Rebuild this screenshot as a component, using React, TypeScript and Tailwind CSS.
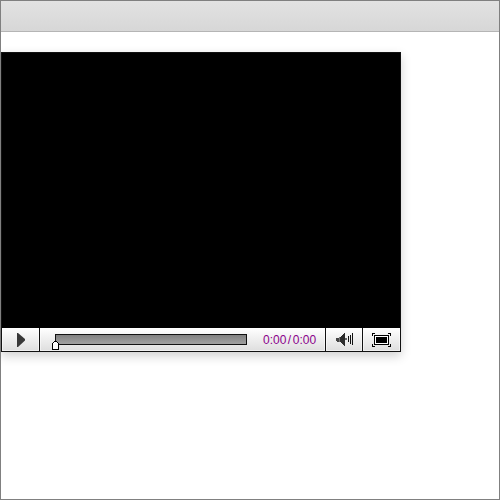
function PlayIcon() {
  return (
    <svg width="8" height="14" viewBox="0 0 8 14">
      <path d="M0 0h1L8 6v1.6L1 14H0Z" fill="#383838" />
    </svg>
  );
}

function VolumeIcon() {
  return (
    <svg width="17" height="13" viewBox="0 0 17 13" shapeRendering="crispEdges">
      <path d="M0 5h3v4H1v-1H0z" fill="#444" />
      <path d="M3 4h1v5H3z" fill="#777" />
      <path d="M4 4h1V3h1V2h1V1h1V0h1v13H8v-1H7v-1H6v-1H5V9H4z" fill="#2c2c2c" />
      <path d="M9 5h2v2H9z" fill="#666" />
      <path d="M12 3h1v6h-1zM14 2h1v9h-1zM16 0h1v12h-1z" fill="#111" />
    </svg>
  );
}

function FullscreenIcon() {
  return (
    <svg width="19" height="14" viewBox="0 0 19 14" shapeRendering="crispEdges">
      <path d="M0 0h3v1H1v2H0zM16 0h3v3h-1V1h-2zM0 11h1v2h2v1H0zM18 11h1v3h-3v-1h2z" fill="#000" />
      <path d="M2 2h15v10H2z" fill="#000" />
      <path d="M3 3h13v8H3z" fill="#fff" />
      <path d="M4 4h11v6H4z" fill="#000" />
    </svg>
  );
}

function Thumb() {
  return (
    <svg className="absolute -left-[4px] top-[6px]" width="7" height="9" viewBox="0 0 7 9" shapeRendering="crispEdges">
      <path d="M2 0h3v1h1v1h1v7H0V2h1V1h1z" fill="#000" />
      <path d="M2 1h3v1h1v6H1V2h1z" fill="#fff" />
    </svg>
  );
}

export default function App() {
  return (
    <div className="h-[500px] w-[500px] overflow-hidden border border-[#808080] bg-white">
      <header className="h-[31px] border-b border-[#b5b5b5] bg-linear-to-b from-[#e2e2e2] to-[#d7d7d7]" />
      <main className="mt-5 w-[400px] border border-[#111] shadow-[0_4px_10px_rgba(0,0,0,0.19)]">
        <div className="h-[275px] bg-black" />
        <div className="flex h-[23px] bg-linear-to-b from-white to-[#dedede]">
          <button className="flex w-[38px] items-start border-r border-[#111] pl-[15px] pt-[5px] shadow-[inset_0_0_0_1px_rgba(255,255,255,0.5)]" aria-label="Play">
            <PlayIcon />
          </button>
          <div className="flex flex-1 items-start border-r border-[#111] pl-[15px] shadow-[inset_0_0_0_1px_rgba(255,255,255,0.5)]">
            <div className="relative mt-[6px] h-[11px] w-[192px] border border-[#111] bg-linear-to-b from-[#808080] to-[#a0a0a0]">
              <Thumb />
            </div>
            <div className="ml-4 flex gap-[1.5px] pt-px font-['Liberation_Sans',Arial,sans-serif] text-xs leading-[23px] text-[#8b008b]">
              <span>0:00</span>
              <span>/</span>
              <span>0:00</span>
            </div>
          </div>
          <button className="flex w-[37px] items-start border-r border-[#111] pl-[10px] pt-[5px] shadow-[inset_0_0_0_1px_rgba(255,255,255,0.5)]" aria-label="Volume">
            <VolumeIcon />
          </button>
          <button className="flex w-[37px] items-start pl-[9px] pt-[5px] shadow-[inset_0_0_0_1px_rgba(255,255,255,0.5)]" aria-label="Full screen">
            <FullscreenIcon />
          </button>
        </div>
      </main>
    </div>
  );
}
